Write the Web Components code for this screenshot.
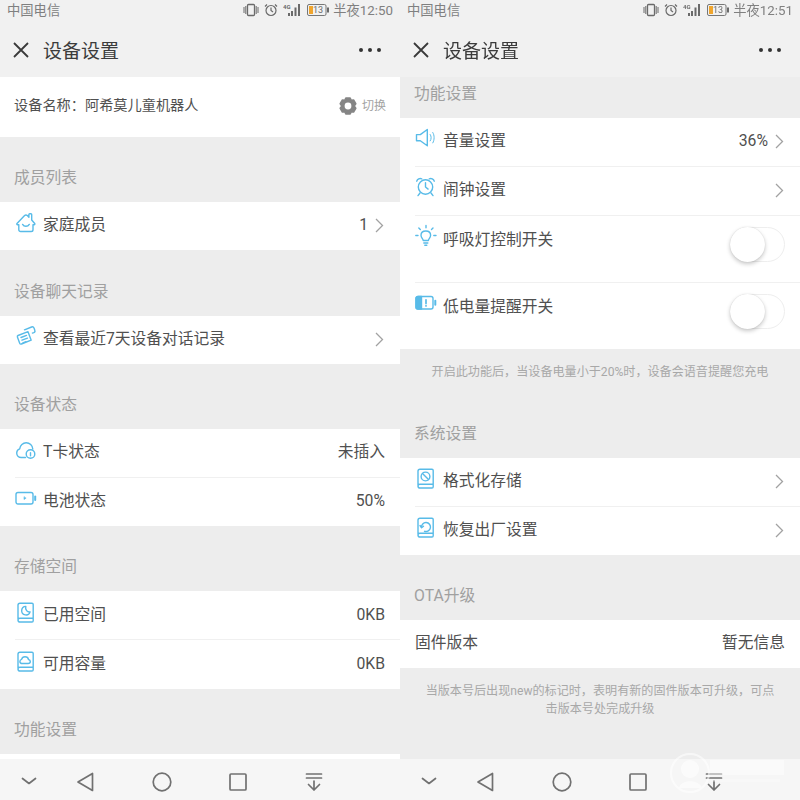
<!DOCTYPE html>
<html lang="zh">
<head>
<meta charset="utf-8">
<title>设备设置</title>
<style>
    html, body { margin: 0; padding: 0; }
    body {
        width: 800px;
        height: 800px;
        overflow: hidden;
        display: flex;
        font-family: Roboto, "Noto Sans CJK SC", sans-serif;
        background: #ededed;
        filter: blur(.3px);
    }
    svg.i { display: block; fill: none; stroke: #58bbe8; stroke-width: 1.4; stroke-linecap: round; stroke-linejoin: round; }
    .watermark { position: absolute; left: 670px; top: 750px; opacity: .6; }
</style>
</head>
<body>

<phone-pane>
    <status-bar slot="top" time="半夜12:50"></status-bar>
    <app-header slot="top">设备设置</app-header>

    <device-name>设备名称：阿希莫儿童机器人</device-name>

    <section-title>成员列表</section-title>
    <setting-row chevron>
        <svg class="i" slot="icon" width="22" height="24" viewBox="0 0 22 24"><path d="M2 13.500 9.600 5.600c.8-.8 1.900-.8 2.700 0l1.600 1.600V4.600c0-.5.3-.8.8-.8h1.200c.5 0 .8.3.8.8v5.400l3 3.500c.4.600 0 1.200-.6 1.200h-1.100v5c0 1-.8 1.800-1.800 1.800H5.600c-1 0-1.800-.8-1.800-1.800v-5H2.600c-.7 0-1-.6-.6-1.200z"/><path d="M7.600 14.400c1.400 2.500 5.200 2.500 6.700 0"/></svg>
        家庭成员
        <span slot="value">1</span>
    </setting-row>

    <section-title style="padding-top:30px">设备聊天记录</section-title>
    <setting-row chevron>
        <svg class="i" slot="icon" width="22" height="24" viewBox="0 0 22 24"><path d="M3 11.500 13 7.700l3.200 8.500-9.800 3.800c-.8.300-1.400 0-1.700-.7l-2.300-6.200c-.2-.7 0-1.300.6-1.600z"/><path d="M9.500 5.800 16.600 3c1-.4 2 .1 2.400 1l.8 2.200c.4 1-.1 2-1 2.400l-1.400.5"/><path d="M6 13.500l5.500-2.100M7 16.200l5.500-2.100M8 18.800l3-1.200"/></svg>
        查看最近7天设备对话记录
    </setting-row>

    <section-title>设备状态</section-title>
    <setting-row>
        <svg class="i" slot="icon" width="22" height="24" viewBox="0 0 22 24"><path d="M10.500 20.500H6.200c-2.600 0-4.500-2-4.500-4.400 0-2 1.300-3.700 3-4.300.4-3.400 3.200-6 6.500-6 3.500 0 6.300 2.700 6.600 6.200"/><circle cx="15.500" cy="17" r="4.300"/><path d="M15.500 15.800v3"/></svg>
        T卡状态
        <span slot="value">未插入</span>
    </setting-row>
    <setting-row divider>
        <svg class="i" slot="icon" width="22" height="24" viewBox="0 0 22 24"><rect x="1" y="6.500" width="17" height="11.500" rx="2"/><path d="M20.200 10.500v3.500" stroke-width="2"/><path d="M9 11v2.500l1.800-1.200z" fill="#58bbe8" stroke-width=".6"/></svg>
        电池状态
        <span slot="value">50%</span>
    </setting-row>

    <section-title>存储空间</section-title>
    <setting-row style="--row-pad:12px">
        <svg class="i" slot="icon" width="22" height="24" viewBox="0 0 22 24"><path d="M3 19V5.200C3 4 3.800 3.200 5 3.200h12c.7 0 1.200.5 1.200 1.200v16.400c0 .7-.5 1.200-1.200 1.200H5c-1.200 0-2-.9-2-2.100 0-1 .8-1.700 2-1.700h13.200"/><path d="M10.800 6.400a4.300 4.300 0 1 0 4.300 5.500c-2.800.5-5.100-2.200-4.300-5.500z"/></svg>
        已用空间
        <span slot="value">0KB</span>
    </setting-row>
    <setting-row divider style="--row-h:50px;--row-pad:12px">
        <svg class="i" slot="icon" width="22" height="24" viewBox="0 0 22 24"><path d="M3 19V5.200C3 4 3.800 3.200 5 3.200h12c.7 0 1.200.5 1.200 1.200v16.400c0 .7-.5 1.200-1.200 1.200H5c-1.200 0-2-.9-2-2.100 0-1 .8-1.700 2-1.700h13.200"/><path d="M7.200 14.500c-1.500 0-2.300-1-2.300-2.100 0-1 .7-1.800 1.700-2 .4-1.500 1.700-2.600 3.400-2.600 1.800 0 3.200 1.200 3.500 2.700 1 .2 1.800 1 1.800 2 0 1.100-.9 2-2.200 2z"/></svg>
        可用容量
        <span slot="value">0KB</span>
    </setting-row>

    <section-title>功能设置</section-title>
    <setting-row></setting-row>

    <nav-bar slot="bottom"></nav-bar>
</phone-pane>

<phone-pane>
    <status-bar slot="top" time="半夜12:51"></status-bar>
    <app-header slot="top">设备设置</app-header>

    <section-title style="padding-top:5px">功能设置</section-title>
    <setting-row chevron>
        <svg class="i" slot="icon" width="22" height="24" viewBox="0 0 22 24"><path d="M1.500 8.600v6.200h3.800l7 5V3.500l-7 5.100z"/><path d="M15.200 8.500c1.300 1.800 1.300 4.600 0 6.400M17.800 6.500c1.800 2.800 1.800 7.500 0 10.400" stroke-width="1"/></svg>
        音量设置
        <span slot="value">36%</span>
    </setting-row>
    <setting-row divider chevron>
        <svg class="i" slot="icon" width="22" height="24" viewBox="0 0 22 24"><circle cx="10.500" cy="12" r="7.200"/><path d="M10.500 7.800V12l2.600 2.100M1.700 6.200c.7-2 3-3.300 5-2.400M19.300 6.200c-.7-2-3-3.300-5-2.400M5 18l-2 2.600M16 18l2 2.600"/></svg>
        闹钟设置
    </setting-row>
    <setting-row divider tall>
        <svg class="i" slot="icon" width="22" height="24" viewBox="0 0 22 24"><path d="M8.200 16.500c0-1.400-2.200-2.600-2.200-5.200 0-2.500 2-4.300 4.800-4.300s4.800 1.800 4.800 4.300c0 2.600-2.200 3.800-2.200 5.200zM8.800 19h4M9.800 21.200h2"/><path d="M11 1.500v2.200M3.800 4l1.500 1.500M18 4l-1.500 1.500M.8 11.500H3M18.800 11.500H21"/></svg>
        呼吸灯控制开关
        <toggle-switch slot="value"></toggle-switch>
    </setting-row>
    <setting-row divider tall>
        <svg class="i" slot="icon" width="22" height="24" viewBox="0 0 22 24"><path d="M3 5.500h13c1.100 0 2 .9 2 2v8.500c0 1.100-.9 2-2 2H3c-1.100 0-2-.9-2-2V7.500c0-1.100.9-2 2-2z"/><path d="M3 5.500h3.500v12.500H3c-1.100 0-2-.9-2-2V7.500c0-1.100.9-2 2-2z" fill="#58bbe8"/><path d="M11 8.800v3.600M11 14.700v.3" stroke-width="1.700"/><path d="M20.300 9.800v4" stroke-width="2"/></svg>
        低电量提醒开关
        <toggle-switch slot="value"></toggle-switch>
    </setting-row>
    <info-note>开启此功能后，当设备电量小于20%时，设备会语音提醒您充电</info-note>

    <section-title>系统设置</section-title>
    <setting-row chevron>
        <svg class="i" slot="icon" width="22" height="24" viewBox="0 0 22 24"><path d="M3 19V5.200C3 4 3.800 3.200 5 3.200h12c.7 0 1.200.5 1.200 1.200v16.400c0 .7-.5 1.200-1.200 1.200H5c-1.200 0-2-.9-2-2.100 0-1 .8-1.700 2-1.700h13.200"/><circle cx="10.500" cy="10.500" r="4.400"/><path d="M7.500 7.500l6 6"/></svg>
        格式化存储
    </setting-row>
    <setting-row divider chevron>
        <svg class="i" slot="icon" width="22" height="24" viewBox="0 0 22 24"><path d="M3 19V5.200C3 4 3.800 3.200 5 3.200h12c.7 0 1.200.5 1.200 1.200v16.400c0 .7-.5 1.200-1.200 1.200H5c-1.200 0-2-.9-2-2.100 0-1 .8-1.700 2-1.700h13.200"/><path d="M6.500 12.500a4.500 4.500 0 1 1 3 3.800"/><path d="M5 10.500l1.500 2.200 2-1.500"/></svg>
        恢复出厂设置
    </setting-row>

    <section-title>OTA升级</section-title>
    <setting-row plain>
        固件版本
        <span slot="value">暂无信息</span>
    </setting-row>
    <info-note wide>当版本号后出现new的标记时，表明有新的固件版本可升级，可点<br>击版本号处完成升级</info-note>

    <nav-bar slot="bottom"></nav-bar>
</phone-pane>

<svg class="watermark" width="120" height="48" viewBox="0 0 120 48" fill="#fff">
    <circle cx="20" cy="23" r="19" fill="none" stroke="#fff" stroke-width="2"/>
    <circle cx="20" cy="19" r="9"/>
    <path d="M9 38c2-9 20-9 23 0z"/>
    <path d="M40 10h74v15H40z" opacity=".75"/>
    <path d="M40 29h70v3H40z" opacity=".45"/>
</svg>

<script>
class PhonePane extends HTMLElement {
    constructor() {
        super();
        this.attachShadow({mode: 'open'});
    }
    connectedCallback() {
        this.shadowRoot.innerHTML = `
        <style>
            :host { display: flex; flex-direction: column; width: 400px; height: 800px; overflow: hidden; }
            .body { flex: 1; min-height: 0; overflow: hidden; background: #ededed; }
        </style>
        <slot name="top"></slot>
        <div class="body"><slot></slot></div>
        <slot name="bottom"></slot>`;
    }
}
customElements.define('phone-pane', PhonePane);

class StatusBar extends HTMLElement {
    constructor() {
        super();
        this.attachShadow({mode: 'open'});
    }
    connectedCallback() {
        this.shadowRoot.innerHTML = `
        <style>
            :host { display: flex; align-items: center; box-sizing: border-box; height: 22px; padding: 0 7px 3px; background: #f1f1f1; color: #808080; font-size: 13.300px; }
            .right { margin-left: auto; display: flex; align-items: center; gap: 5px; }
            .right span { margin-left: -1px; }
            svg { display: block; }
        </style>
        <span>中国电信</span>
        <div class="right">
            <svg width="16" height="14" viewBox="0 0 16 14" fill="none" stroke="#6a6a6a" stroke-width="1.300"><rect x="4.500" y="1.500" width="7" height="11" rx="1"/><path d="M1 4v6M2.800 3v8M13.200 3v8M15 4v6" stroke-width="1"/></svg>
            <svg width="14" height="14" viewBox="0 0 14 14" fill="none" stroke="#6a6a6a" stroke-width="1.200"><circle cx="7" cy="7.500" r="5"/><path d="M7 4.500v3l2 1.500M1 3.500 3 1.500M13 3.500l-2-2"/></svg>
            <svg width="18" height="14" viewBox="0 0 18 14" fill="#6a6a6a"><text x="0" y="5.500" font-size="6" font-weight="700" font-family="Roboto">4G</text><rect x="5" y="10" width="2" height="3"/><rect x="8" y="8" width="2" height="5"/><rect x="11.500" y="4.500" width="2" height="8.500"/><rect x="15" y="1" width="2" height="12"/></svg>
            <svg width="22" height="12" viewBox="0 0 22 12" fill="none" style="margin-left:1px"><rect x=".5" y=".5" width="18.500" height="11" rx="1.500" stroke="#777"/><rect x="2" y="2" width="4" height="8" fill="#f0a52c"/><text x="6" y="9.300" font-size="9" fill="#6a6a6a" font-family="Roboto">13</text><rect x="20" y="3.500" width="2" height="5" fill="#6a6a6a"/></svg>
            <span>${this.getAttribute('time')}</span>
        </div>`;
    }
}
customElements.define('status-bar', StatusBar);

class AppHeader extends HTMLElement {
    constructor() {
        super();
        this.attachShadow({mode: 'open'});
    }
    connectedCallback() {
        this.shadowRoot.innerHTML = `
        <style>
            :host { display: flex; align-items: center; height: 55px; padding: 0 19px 0 12px; background: #f1f1f1; color: #3c3c3c; font-size: 19px; }
            .title { margin-left: 13px; }
            .more { margin-left: auto; display: flex; gap: 5px; }
            .more i { width: 4px; height: 4px; border-radius: 50%; background: #333; }
            svg { display: block; }
        </style>
        <svg width="18" height="18" viewBox="0 0 18 18" fill="none" stroke="#3a3a3a" stroke-width="1.800"><path d="M2 2l14 14M16 2 2 16"/></svg>
        <span class="title"><slot></slot></span>
        <div class="more"><i></i><i></i><i></i></div>`;
    }
}
customElements.define('app-header', AppHeader);

class DeviceName extends HTMLElement {
    constructor() {
        super();
        this.attachShadow({mode: 'open'});
    }
    connectedCallback() {
        this.shadowRoot.innerHTML = `
        <style>
            :host { display: flex; align-items: center; box-sizing: border-box; height: 60px; padding: 0 14px 6px; background: #fff; color: #505050; font-size: 14.200px; }
            .switch { margin-left: auto; display: flex; align-items: center; gap: 4px; color: #a3a3a3; font-size: 12px; }
            svg { display: block; margin-top: 3px; stroke: #858585; stroke-width: 1.500; stroke-linejoin: round; }
        </style>
        <span><slot></slot></span>
        <div class="switch">
            <svg width="20" height="20" viewBox="0 0 20 20" fill="#858585"><path d="M7.800 2h4.400l1 2.300 2.400-.4 2.200 3.800-1.600 2.300 1.600 2.300-2.200 3.800-2.400-.4-1 2.300H7.800l-1-2.300-2.400.4-2.200-3.800 1.600-2.300-1.600-2.300 2.200-3.800 2.400.4z"/><circle cx="10" cy="10" r="3.400" fill="#fff" stroke="none"/></svg>
            <span>切换</span>
        </div>`;
    }
}
customElements.define('device-name', DeviceName);

class SectionTitle extends HTMLElement {
    constructor() {
        super();
        this.attachShadow({mode: 'open'});
    }
    connectedCallback() {
        this.shadowRoot.innerHTML = `
        <style>
            :host { display: block; padding: 29px 15px 12px 14px; background: #ededed; color: #a0a0a0; font-size: 15.750px; line-height: 24px; }
        </style>
        <slot></slot>`;
    }
}
customElements.define('section-title', SectionTitle);

class SettingRow extends HTMLElement {
    constructor() {
        super();
        this.attachShadow({mode: 'open'});
    }
    connectedCallback() {
        const chevron = this.hasAttribute('chevron')
            ? `<svg class="chev" width="9" height="15" viewBox="0 0 9 15" fill="none" stroke="#a2a2a2" stroke-width="1.300"><path d="M1 1l6.500 6.500L1 14"/></svg>`
            : '';
        // first row of a group has no line and is 1px shorter
        this.shadowRoot.innerHTML = `
        <style>
            :host { display: block; background: #fff; color: #505050; font-size: 15.750px; }
            .wrap { display: flex; align-items: flex-start; box-sizing: border-box; height: 48px; margin-left: 15px; padding: var(--row-pad, 11px) 15px 0 0; }
            :host([divider]) .wrap { height: var(--row-h, 49px); border-top: 1px solid #f0f0f0; }
            :host([tall]) .wrap { height: 67px; }
            :host([tall]) .label { margin-top: 1px; }
            .label { line-height: 24px; }
            .icon { width: 22px; height: 24px; margin: -3px 6px 0 0; }
            :host([plain]) .icon { display: none; }
            .right { margin-left: auto; display: flex; align-items: center; gap: 7px; min-height: 24px; line-height: 24px; }
            .chev { display: block; margin-right: 1px; }
        </style>
        <div class="wrap">
            <div class="icon"><slot name="icon"></slot></div>
            <div class="label"><slot></slot></div>
            <div class="right"><slot name="value"></slot>${chevron}</div>
        </div>`;
    }
}
customElements.define('setting-row', SettingRow);

class ToggleSwitch extends HTMLElement {
    constructor() {
        super();
        this.attachShadow({mode: 'open'});
    }
    connectedCallback() {
        this.shadowRoot.innerHTML = `
        <style>
            :host { display: block; box-sizing: border-box; width: 55px; height: 35px; border: 1px solid #eeeeee; border-radius: 18px; background: #fff; position: relative; }
            .knob { position: absolute; left: -1px; top: -1px; width: 35px; height: 35px; border-radius: 50%; background: #fff; box-shadow: 0 2px 4px rgba(0,0,0,.22), 0 0 1px rgba(0,0,0,.15); }
        </style>
        <div class="knob"></div>`;
    }
}
customElements.define('toggle-switch', ToggleSwitch);

class InfoNote extends HTMLElement {
    constructor() {
        super();
        this.attachShadow({mode: 'open'});
    }
    connectedCallback() {
        this.shadowRoot.innerHTML = `
        <style>
            :host { display: block; padding: 13px 20px 11px; background: #ededed; color: #a8a8a8; font-size: 12.100px; line-height: 20px; text-align: center; }
            :host([wide]) { line-height: 18px; padding-top: 14px; }
        </style>
        <slot></slot>`;
    }
}
customElements.define('info-note', InfoNote);

class NavBar extends HTMLElement {
    constructor() {
        super();
        this.attachShadow({mode: 'open'});
    }
    connectedCallback() {
        this.shadowRoot.innerHTML = `
        <style>
            :host { display: flex; align-items: center; box-sizing: border-box; flex: none; height: 41px; padding: 4px 0 0 17px; background: #f6f6f6; }
            svg { display: block; fill: none; stroke: #717171; stroke-width: 1.700; stroke-linejoin: round; stroke-linecap: round; }
            svg + svg { margin-left: 52px; }
            svg:nth-of-type(2) { margin-left: 32px; }
            svg:nth-of-type(3) { margin-left: 53px; }
        </style>
        <svg width="24" height="24" viewBox="0 0 24 24"><path d="M5.500 8.500 12 13.500l6.500-5"/></svg>
        <svg width="24" height="24" viewBox="0 0 24 24"><path d="M19.500 3.500v17L5 12z"/></svg>
        <svg width="24" height="24" viewBox="0 0 24 24"><circle cx="12" cy="12" r="8.800"/></svg>
        <svg width="24" height="24" viewBox="0 0 24 24"><rect x="4" y="4" width="16" height="16" rx="1"/></svg>
        <svg width="24" height="24" viewBox="0 0 24 24"><path d="M4.500 4h15M4.500 8h15M12 11v9M6.500 14.500 12 20l5.500-5.500"/></svg>`;
    }
}
customElements.define('nav-bar', NavBar);
</script>
</body>
</html>
